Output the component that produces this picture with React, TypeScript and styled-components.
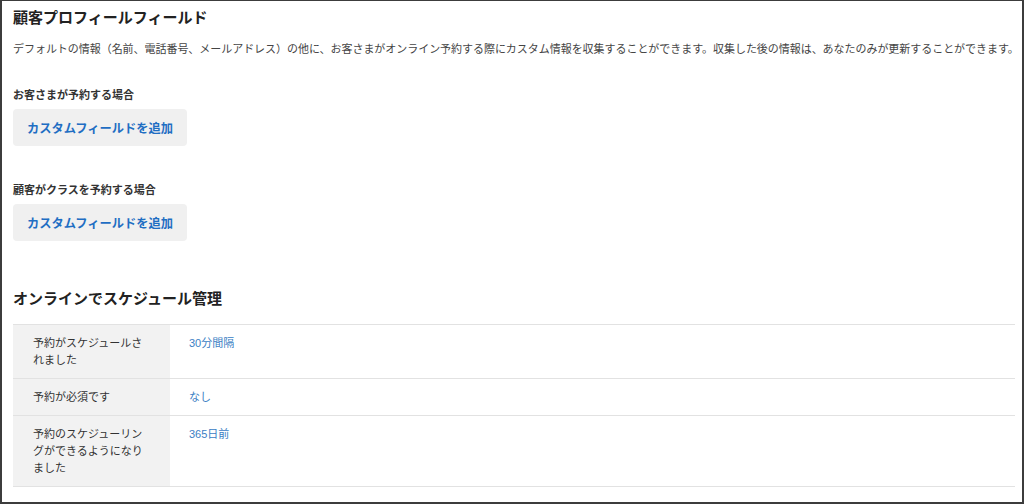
import React from 'react'
import styled, { createGlobalStyle } from 'styled-components'

const GlobalStyle = createGlobalStyle`
  html, body {
    margin: 0;
    padding: 0;
    background: #ffffff;
  }
  body {
    font-family: 'Liberation Sans', 'Noto Sans CJK JP', sans-serif;
    color: #333333;
  }
`

const Frame = styled.div`
  box-sizing: border-box;
  width: 1024px;
  height: 504px;
  border-style: solid;
  border-color: #3c3c3c;
  border-width: 1px 2px 2px 2px;
  padding: 7px 7px 0 11px;
  overflow: hidden;
`

const Title = styled.h2<{ $gap?: number }>`
  margin: ${(p) => p.$gap ?? 0}px 0 0;
  font-size: 15px;
  line-height: 20px;
  font-weight: 700;
  color: #222222;
`

const Description = styled.p`
  margin: 12px 0 0;
  font-size: 11px;
  line-height: 18px;
  letter-spacing: -0.04px;
  color: #444444;
  white-space: nowrap;
`

const SubHead = styled.h3<{ $gap: number }>`
  margin: ${(p) => p.$gap}px 0 0;
  font-size: 11px;
  line-height: 16px;
  font-weight: 700;
  color: #333333;
`

const AddButton = styled.button`
  display: flex;
  align-items: center;
  justify-content: center;
  box-sizing: border-box;
  margin-top: 6px;
  width: 174px;
  height: 37px;
  padding: 0;
  border: none;
  border-radius: 4px;
  background: #f0f0f0;
  font-family: 'Liberation Sans', 'Noto Sans CJK JP', sans-serif;
  font-size: 12.25px;
  font-weight: 700;
  color: #1f6ec3;
  cursor: pointer;
`

const Table = styled.div`
  margin-top: 15px;
  width: 1002px;
  border-bottom: 1px solid #e2e2e2;
`

const Row = styled.div`
  display: grid;
  grid-template-columns: 157px 1fr;
  border-top: 1px solid #e2e2e2;
`

const Label = styled.div`
  background: #f2f2f2;
  padding: 10px 20px 9px;
  font-size: 11px;
  line-height: 17px;
  color: #333333;
`

const Value = styled.div`
  padding: 10px 19px 9px;
  font-size: 11px;
  line-height: 17px;
  color: #3b80c4;
`

const schedule = [
  { label: '予約がスケジュールされました', value: '30分間隔' },
  { label: '予約が必須です', value: 'なし' },
  { label: '予約のスケジューリングができるようになりました', value: '365日前' },
]

const App: React.FC = () => {
  return (
    <>
      <GlobalStyle />
      <Frame>
        <Title>顧客プロフィールフィールド</Title>
        <Description>
          デフォルトの情報（名前、電話番号、メールアドレス）の他に、お客さまがオンライン予約する際にカスタム情報を収集することができます。収集した後の情報は、あなたのみが更新することができます。
        </Description>

        <SubHead $gap={29}>お客さまが予約する場合</SubHead>
        <AddButton>カスタムフィールドを追加</AddButton>

        <SubHead $gap={36}>顧客がクラスを予約する場合</SubHead>
        <AddButton>カスタムフィールドを追加</AddButton>

        <Title $gap={48}>オンラインでスケジュール管理</Title>
        <Table>
          {schedule.map((item) => (
            <Row key={item.label}>
              <Label>{item.label}</Label>
              <Value>{item.value}</Value>
            </Row>
          ))}
        </Table>
      </Frame>
    </>
  )
}

export default App
